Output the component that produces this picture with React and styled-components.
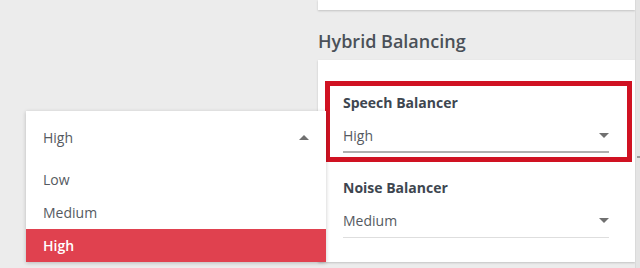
import React from "react";
import styled, { createGlobalStyle } from "styled-components";

const Global = createGlobalStyle`
  html, body { margin: 0; padding: 0; }
  body {
    background: #ececec;
    font-family: "Open Sans", "Noto Sans", sans-serif;
    overflow: hidden;
  }
`;

const Page = styled.div`
  position: relative;
  width: 640px;
  height: 268px;
  display: flex;
  justify-content: flex-end;
  overflow: hidden;
`;

const Column = styled.div`
  width: 317px;
  display: flex;
  flex-direction: column;
`;

const Scrollbar = styled.div`
  width: 5px;
  background: #e4e4e4;
  border-left: 1px solid #dadada;
  box-sizing: border-box;
  position: relative;
`;

const Thumb = styled.div`
  position: absolute;
  left: 1px;
  top: 156px;
  width: 3px;
  height: 2px;
  background: #9a9a9a;
`;

const TopCard = styled.div`
  height: 10px;
  background: #fff;
  box-shadow: 0 1px 2px rgba(0, 0, 0, 0.18);
`;

const Heading = styled.h2`
  margin: 19px 0 0 0;
  height: 31px;
  font-size: 18px;
  font-weight: 600;
  line-height: 24px;
  color: #4a5058;
`;

const Card = styled.div`
  height: 202px;
  background: #fff;
  box-shadow: 0 1px 2px rgba(0, 0, 0, 0.18);
  padding: 21px 3px 0 7px;
  box-sizing: border-box;
  display: flex;
  flex-direction: column;
`;

const Field = styled.div`
  display: flex;
  flex-direction: column;
  padding: ${(p) => (p.$highlight ? "7px 13px 4px 13px" : "16px 18px 0 18px")};
  border: ${(p) => (p.$highlight ? "5px solid #d01222" : "none")};
`;

const Label = styled.div`
  font-size: 14px;
  font-weight: 700;
  line-height: 20px;
  color: #3e4650;
  height: 20px;
`;

const Select = styled.div`
  margin-top: 8px;
  width: 266px;
  height: 32px;
  box-sizing: border-box;
  border-bottom: ${(p) => (p.$muted ? "1px solid #dedede" : "2px solid #b0b0b0")};
  display: flex;
  align-items: center;
  justify-content: space-between;
  padding-bottom: 2px;
  font-size: 14px;
  color: #555a61;
`;

const Caret = ({ up }) => (
  <svg width="10" height="5" viewBox="0 0 10 5" style={{ display: "block" }}>
    <path d={up ? "M0 5 L5 0 L10 5 Z" : "M0 0 L10 0 L5 5 Z"} fill="#707070" />
  </svg>
);

const Menu = styled.div`
  position: absolute;
  left: 26px;
  top: 111px;
  width: 300px;
  height: 151px;
  background: #fff;
  box-shadow: 0 1px 4px rgba(0, 0, 0, 0.22);
  display: flex;
  flex-direction: column;
  z-index: 2;
`;

const MenuHeader = styled.div`
  height: 52px;
  display: flex;
  align-items: center;
  justify-content: space-between;
  padding: 0 17px 0 17px;
  font-size: 14px;
  color: #555a61;
`;

const Option = styled.div`
  height: 33px;
  display: flex;
  align-items: center;
  padding: 0 17px;
  font-size: 14px;
  color: ${(p) => (p.$selected ? "#fff" : "#555a61")};
  background: ${(p) => (p.$selected ? "#e0414f" : "transparent")};
  font-weight: ${(p) => (p.$selected ? 600 : 400)};
`;

export default function App() {
  return (
    <>
      <Global />
      <Page>
        <Column>
          <TopCard />
          <Heading>Hybrid Balancing</Heading>
          <Card>
            <Field $highlight>
              <Label>Speech Balancer</Label>
              <Select>
                <span>High</span>
                <Caret />
              </Select>
            </Field>
            <Field>
              <Label>Noise Balancer</Label>
              <Select $muted>
                <span>Medium</span>
                <Caret />
              </Select>
            </Field>
          </Card>
        </Column>
        <Scrollbar>
          <Thumb />
        </Scrollbar>
        <Menu>
          <MenuHeader>
            <span>High</span>
            <Caret up />
          </MenuHeader>
          <Option>Low</Option>
          <Option>Medium</Option>
          <Option $selected>High</Option>
        </Menu>
      </Page>
    </>
  );
}
